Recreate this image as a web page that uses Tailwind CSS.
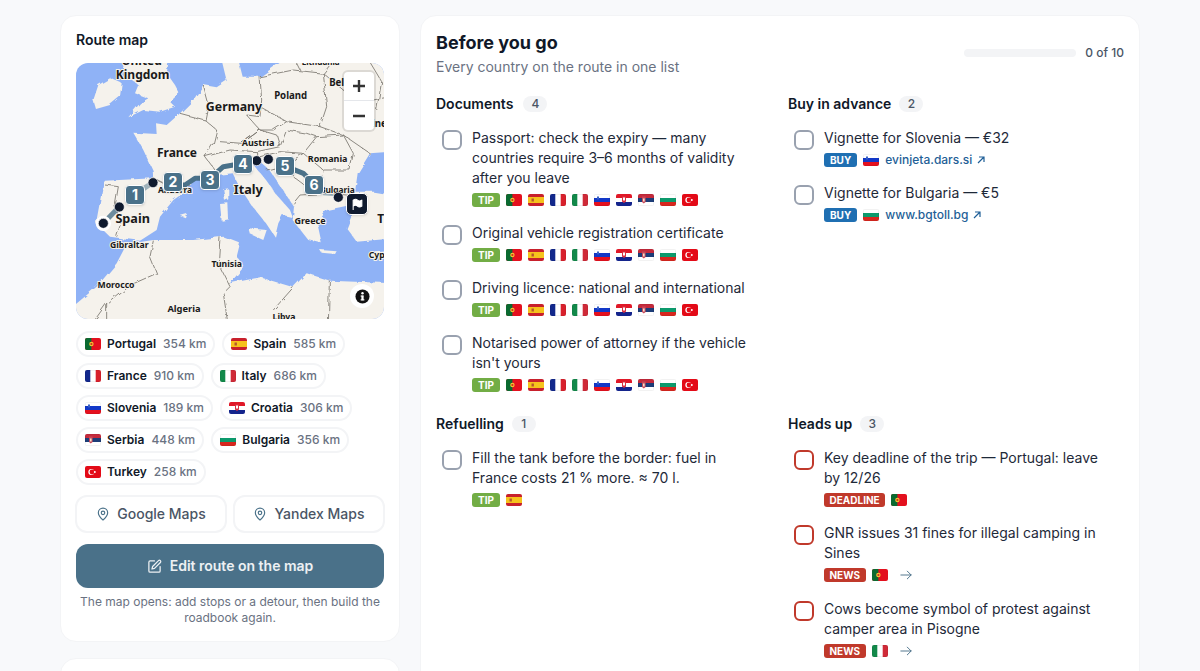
<!DOCTYPE html>
<html lang="en">
<head>
  <meta charset="UTF-8">
  <meta name="viewport" content="width=device-width, initial-scale=1.0">
  <title>Before you go</title>
  <script src="https://cdn.jsdelivr.net/npm/@tailwindcss/browser@4"></script>
</head>
<body class="bg-[#f8f9fb] h-screen overflow-hidden font-['Inter',sans-serif] text-gray-800">
  <!-- Flags -->
  <svg class="hidden">
    <symbol id="pt" viewBox="0 0 16 12"><rect width="16" height="12" fill="#e3101e"/><rect width="6.4" height="12" fill="#0a6a30"/><circle cx="6.4" cy="6" r="2.2" fill="#f4c430"/><circle cx="6.4" cy="6" r="1.1" fill="#c8281e"/></symbol>
    <symbol id="es" viewBox="0 0 16 12"><rect width="16" height="12" fill="#c8202c"/><rect y="3" width="16" height="6" fill="#f6c21c"/><rect x="3.5" y="4.5" width="2.4" height="3" fill="#b5572a"/></symbol>
    <symbol id="fr" viewBox="0 0 16 12"><rect width="16" height="12" fill="#fff"/><rect width="5.3" height="12" fill="#12288c"/><rect x="10.7" width="5.3" height="12" fill="#d8202c"/><rect x=".25" y=".25" width="15.5" height="11.5" fill="none" stroke="#000" stroke-opacity=".1" stroke-width=".5"/></symbol>
    <symbol id="it" viewBox="0 0 16 12"><rect width="16" height="12" fill="#fff"/><rect width="5.3" height="12" fill="#12894a"/><rect x="10.7" width="5.3" height="12" fill="#cf2a38"/><rect x=".25" y=".25" width="15.5" height="11.5" fill="none" stroke="#000" stroke-opacity=".1" stroke-width=".5"/></symbol>
    <symbol id="si" viewBox="0 0 16 12"><rect width="16" height="12" fill="#fff"/><rect y="4" width="16" height="4" fill="#1238c8"/><rect y="8" width="16" height="4" fill="#e5101e"/><path d="M3 2.500h2v2.500l-1 .8-1-.8z" fill="#3a62c4"/><rect x=".25" y=".25" width="15.5" height="11.5" fill="none" stroke="#000" stroke-opacity=".1" stroke-width=".5"/></symbol>
    <symbol id="hr" viewBox="0 0 16 12"><rect width="16" height="12" fill="#fff"/><rect width="16" height="4" fill="#e01828"/><rect y="8" width="16" height="4" fill="#14248c"/><path d="M6 2.500h4v5l-2 1.500-2-1.500z" fill="#d83040"/><path d="M7 3.500h2v3h-2z" fill="#fff"/></symbol>
    <symbol id="rs" viewBox="0 0 16 12"><rect width="16" height="12" fill="#fff"/><rect width="16" height="4" fill="#c52a3c"/><rect y="4" width="16" height="4" fill="#1d3d78"/><path d="M4 2.500h3.600v5.500l-1.800 1.500-1.800-1.500z" fill="#c8485a"/><path d="M5 4.500h1.600v3h-1.600z" fill="#f2e2c8"/><rect x=".25" y=".25" width="15.5" height="11.5" fill="none" stroke="#000" stroke-opacity=".1" stroke-width=".5"/></symbol>
    <symbol id="bg" viewBox="0 0 16 12"><rect width="16" height="12" fill="#fff"/><rect y="4" width="16" height="4" fill="#0c9a6c"/><rect y="8" width="16" height="4" fill="#d8261e"/><rect x=".25" y=".25" width="15.5" height="11.5" fill="none" stroke="#000" stroke-opacity=".1" stroke-width=".5"/></symbol>
    <symbol id="tr" viewBox="0 0 16 12"><rect width="16" height="12" fill="#e30a17"/><circle cx="6.300" cy="6" r="3" fill="#fff"/><circle cx="7" cy="6" r="2.400" fill="#e30a17"/><circle cx="9.800" cy="6" r="1" fill="#fff"/></symbol>
  </svg>

  <div class="mx-auto w-[1080px] flex items-start gap-5 pt-[15px]">
    <!-- Left column -->
    <div class="w-[340px] shrink-0 flex flex-col gap-4">
      <div class="bg-white rounded-2xl border border-gray-100 px-[15px] pt-[14px] h-[627px]">
        <h2 class="text-sm font-semibold text-gray-900 leading-5">Route map</h2>

        <!-- Map -->
        <div class="relative mt-[13px] h-[256px] rounded-xl overflow-hidden bg-[#8fb2f6]">
          <svg class="w-full h-full" viewBox="48 159 924 768" preserveAspectRatio="none">
            <defs>
              <filter id="rough" x="-5%" y="-5%" width="110%" height="110%"><feTurbulence type="fractalNoise" baseFrequency="0.035" numOctaves="3" seed="4"/><feDisplacementMap in="SourceGraphic" scale="14"/></filter>
            </defs>
            <g filter="url(#rough)">
              <g fill="#f5f2ec">
                <path d="M175 130L330 130L320 190L345 225L358 250L330 275L345 290L300 305L250 300L205 322L240 280L265 265L225 250L235 225L215 210L195 190Z"/>
                <path d="M115 225L150 205L185 220L180 260L150 285L108 297L100 270Z"/>
                <path d="M220 368L290 372L288 340L320 345L360 310L400 270L430 225L470 232L500 212L480 130L530 130L548 200L600 200L700 130L1000 130L1000 425L930 430L893 490L885 545L940 545L1000 555L1000 685L890 695L860 655L880 605L858 588L800 600L772 640L785 700L745 690L698 630L702 590L675 550L628 480L600 455L578 462L618 510L650 555L690 600L698 622L668 615L655 640L645 680L618 640L578 590L538 530L518 490L470 495L400 512L395 532L340 570L300 620L290 660L240 692L150 680L108 640L130 520L135 512L280 505L278 480L250 420Z"/>
                <path d="M20 905L110 830L170 760L200 702L280 690L400 690L490 680L540 700L530 740L552 770L510 820L600 802L700 832L740 790L810 812L1000 820L1000 960L20 960Z"/>
                <path d="M490 538L505 535L505 568L495 572Z"/>
                <path d="M480 582L505 580L507 628L485 632Z"/>
                <path d="M565 655L620 660L610 690L570 672Z"/>
                <path d="M360 618L382 612L378 625Z"/>
                <path d="M780 720L830 724L825 732L785 728Z"/>
                <path d="M925 725L990 720L990 745L940 745Z"/>
              </g>
              <g fill="none" stroke="#77746c" stroke-width="2.500" stroke-linejoin="round">
                <path d="M135 525L175 530L165 590L182 640L170 680"/>
                <path d="M280 505L330 530L395 530"/>
                <path d="M360 310L435 330L470 360L460 400L435 440L480 500"/>
                <path d="M430 225L445 280L435 330"/>
                <path d="M600 200L605 270L600 320L560 315L600 360L545 400L480 395"/>
                <path d="M600 200L700 180L790 190L800 290L780 350L680 335L600 290"/>
                <path d="M600 360L640 360L680 335"/>
                <path d="M545 400L600 360L650 375L660 410L590 425L510 420L435 440"/>
                <path d="M590 425L590 455"/>
                <path d="M660 410L680 360L740 370L770 380L730 430L660 425L600 440"/>
                <path d="M770 380L850 375L880 430L870 480L790 480L730 430"/>
                <path d="M780 350L850 375L930 430"/>
                <path d="M790 480L780 520L800 550L885 545"/>
                <path d="M730 430L700 450L700 500L740 530L780 520"/>
                <path d="M620 480L660 470L700 450"/>
                <path d="M700 580L720 555L800 550L860 555L880 562"/>
                <path d="M790 190L830 140"/>
                <path d="M790 190L850 240L940 270L990 260"/>
                <path d="M700 140L720 180M920 140L965 215L950 300"/>
                <path d="M280 692L270 740L290 790L200 830L140 880L140 950"/>
                <path d="M480 682L475 760L510 830L490 850L505 950"/>
                <path d="M808 812L805 950"/>
                <path d="M90 950L140 880"/>
                <path d="M700 832L640 900"/>
              </g>
            </g>
            <!-- Route -->
            <g fill="none" stroke="#4a7189" stroke-width="15" stroke-linejoin="round">
              <path d="M130 640L178 590" stroke-opacity=".8"/>
              <path d="M225 553L278 518" stroke-opacity=".5"/>
              <path d="M340 525L375 525L405 505L450 505L490 470L550 460"/>
              <path d="M672 467L730 490L762 522"/>
              <path d="M790 548L835 552" stroke-opacity=".5"/>
            </g>
            <!-- Labels -->
            <g class="font-['Noto_Sans',sans-serif] font-bold" fill="#1a1a1a" stroke="#f5f2ec" stroke-width="6" paint-order="stroke" text-anchor="middle">
              <text x="245" y="165" font-size="36">United</text>
              <text x="248" y="208" font-size="36">Kingdom</text>
              <text x="522" y="303" font-size="37">Germany</text>
              <text x="692" y="266" font-size="29">Poland</text>
              <text x="830" y="227" font-size="29">Bel</text>
              <text x="958" y="352" font-size="29">ine</text>
              <text x="782" y="165" font-size="24">Lithuania</text>
              <text x="594" y="408" font-size="27">Austria</text>
              <text x="351" y="440" font-size="36">France</text>
              <text x="803" y="455" font-size="27">Romania</text>
              <text x="345" y="550" font-size="25">Andorra</text>
              <text x="565" y="552" font-size="38">Italy</text>
              <text x="832" y="548" font-size="25">Bulgaria</text>
              <text x="218" y="638" font-size="38">Spain</text>
              <text x="750" y="643" font-size="27">Greece</text>
              <text x="962" y="638" font-size="36">T</text>
              <text x="208" y="714" font-size="26">Gibraltar</text>
              <text x="500" y="770" font-size="26">Tunisia</text>
              <text x="168" y="833" font-size="26">Morocco</text>
              <text x="950" y="743" font-size="26">Cyp</text>
              <text x="372" y="905" font-size="28">Algeria</text>
              <text x="672" y="930" font-size="26">Libya</text>
            </g>
            <!-- Stops -->
            <circle cx="130" cy="640" r="23" fill="#fff"/>
            <g fill="#0f1a2e" stroke="#fff" stroke-width="2">
              <circle cx="130" cy="640" r="15"/>
              <circle cx="178" cy="591" r="15"/>
              <circle cx="279" cy="518" r="15"/>
              <circle cx="590" cy="452" r="15"/>
              <circle cx="625" cy="448" r="15"/>
              <circle cx="835" cy="562" r="15"/>
            </g>
          </svg>

          <!-- Numbered pins -->
          <div class="absolute left-[49px] top-[122px] w-5 h-5 rounded-[4px] border-[1.5px] border-white bg-[#4a7189] shadow text-white text-sm font-bold flex items-center justify-center">1</div>
          <div class="absolute left-[87px] top-[109px] w-5 h-5 rounded-[4px] border-[1.5px] border-white bg-[#4a7189] shadow text-white text-sm font-bold flex items-center justify-center">2</div>
          <div class="absolute left-[124px] top-[107px] w-5 h-5 rounded-[4px] border-[1.5px] border-white bg-[#4a7189] shadow text-white text-sm font-bold flex items-center justify-center">3</div>
          <div class="absolute left-[157px] top-[91px] w-5 h-5 rounded-[4px] border-[1.5px] border-white bg-[#4a7189] shadow text-white text-sm font-bold flex items-center justify-center">4</div>
          <div class="absolute left-[199px] top-[93px] w-5 h-5 rounded-[4px] border-[1.5px] border-white bg-[#4a7189] shadow text-white text-sm font-bold flex items-center justify-center">5</div>
          <div class="absolute left-[228px] top-[112px] w-5 h-5 rounded-[4px] border-[1.5px] border-white bg-[#4a7189] shadow text-white text-sm font-bold flex items-center justify-center">6</div>
          <div class="absolute left-[270px] top-[130px] w-[22px] h-[22px] rounded-[5px] border-[1.5px] border-white bg-[#0f1a2e] shadow flex items-center justify-center">
            <svg class="w-[13px] h-[13px]" viewBox="0 0 24 24" fill="#fff" stroke="#fff" stroke-width="2" stroke-linejoin="round"><path d="M4 22V4c3-2 6-2 8 0s5 2 8 0v11c-3 2-6 2-8 0s-5-2-8 0"/></svg>
          </div>

          <!-- Zoom control -->
          <div class="absolute left-[268px] top-[9px] w-[30px] rounded-[4px] bg-white shadow-[0_0_0_2px_rgba(0,0,0,0.1)] flex flex-col divide-y divide-gray-200">
            <div class="h-[29px] flex items-center justify-center">
              <svg class="w-3.5 h-3.5" viewBox="0 0 14 14" stroke="#333" stroke-width="2.400"><path d="M7 1v12M1 7h12"/></svg>
            </div>
            <div class="h-[29px] flex items-center justify-center">
              <svg class="w-3.5 h-3.5" viewBox="0 0 14 14" stroke="#333" stroke-width="2.400"><path d="M1 7h12"/></svg>
            </div>
          </div>

          <!-- Attribution button -->
          <div class="absolute left-[274px] top-[221px] w-6 h-6 rounded-full bg-white flex items-center justify-center">
            <svg class="w-[15px] h-[15px]" viewBox="0 0 16 16"><circle cx="8" cy="8" r="7.500" fill="#111"/><rect x="6.800" y="7" width="2.400" height="5" fill="#fff"/><rect x="6" y="11" width="4" height="1.200" fill="#fff"/><rect x="6" y="7" width="3" height="1.100" fill="#fff"/><circle cx="8" cy="4.500" r="1.300" fill="#fff"/></svg>
          </div>
        </div>

        <!-- Countries -->
        <div class="mt-3 flex flex-wrap gap-x-[7px] gap-y-[6px] text-xs leading-4">
          <div class="h-[26px] px-[7px] rounded-full border-2 border-gray-100 flex items-center"><svg class="w-4 h-3 rounded-[2px]"><use href="#pt"/></svg><span class="ml-[6px] font-semibold text-gray-900">Portugal</span><span class="ml-[7px] font-medium text-gray-500">354 km</span></div>
          <div class="h-[26px] px-[7px] rounded-full border-2 border-gray-100 flex items-center"><svg class="w-4 h-3 rounded-[2px]"><use href="#es"/></svg><span class="ml-[6px] font-semibold text-gray-900">Spain</span><span class="ml-[7px] font-medium text-gray-500">585 km</span></div>
          <div class="h-[26px] px-[7px] rounded-full border-2 border-gray-100 flex items-center"><svg class="w-4 h-3 rounded-[2px]"><use href="#fr"/></svg><span class="ml-[6px] font-semibold text-gray-900">France</span><span class="ml-[7px] font-medium text-gray-500">910 km</span></div>
          <div class="h-[26px] px-[7px] rounded-full border-2 border-gray-100 flex items-center"><svg class="w-4 h-3 rounded-[2px]"><use href="#it"/></svg><span class="ml-[6px] font-semibold text-gray-900">Italy</span><span class="ml-[7px] font-medium text-gray-500">686 km</span></div>
          <div class="h-[26px] px-[7px] rounded-full border-2 border-gray-100 flex items-center"><svg class="w-4 h-3 rounded-[2px]"><use href="#si"/></svg><span class="ml-[6px] font-semibold text-gray-900">Slovenia</span><span class="ml-[7px] font-medium text-gray-500">189 km</span></div>
          <div class="h-[26px] px-[7px] rounded-full border-2 border-gray-100 flex items-center"><svg class="w-4 h-3 rounded-[2px]"><use href="#hr"/></svg><span class="ml-[6px] font-semibold text-gray-900">Croatia</span><span class="ml-[7px] font-medium text-gray-500">306 km</span></div>
          <div class="h-[26px] px-[7px] rounded-full border-2 border-gray-100 flex items-center"><svg class="w-4 h-3 rounded-[2px]"><use href="#rs"/></svg><span class="ml-[6px] font-semibold text-gray-900">Serbia</span><span class="ml-[7px] font-medium text-gray-500">448 km</span></div>
          <div class="h-[26px] px-[7px] rounded-full border-2 border-gray-100 flex items-center"><svg class="w-4 h-3 rounded-[2px]"><use href="#bg"/></svg><span class="ml-[6px] font-semibold text-gray-900">Bulgaria</span><span class="ml-[7px] font-medium text-gray-500">356 km</span></div>
          <div class="h-[26px] px-[7px] rounded-full border-2 border-gray-100 flex items-center"><svg class="w-4 h-3 rounded-[2px]"><use href="#tr"/></svg><span class="ml-[6px] font-semibold text-gray-900">Turkey</span><span class="ml-[7px] font-medium text-gray-500">258 km</span></div>
        </div>

        <!-- External maps -->
        <div class="mt-[10px] -mx-px grid grid-cols-2 gap-[6px]">
          <a class="h-[38px] rounded-xl border-2 border-gray-100 flex items-center justify-center gap-[7px] text-sm font-medium text-gray-600">
            <svg class="w-[14px] h-[14px]" viewBox="0 0 24 24" fill="none" stroke="#4a7189" stroke-width="2" stroke-linecap="round" stroke-linejoin="round"><path d="M20 10c0 5-5.500 10.200-7.400 11.800a1 1 0 0 1-1.200 0C9.500 20.200 4 15 4 10a8 8 0 0 1 16 0"/><circle cx="12" cy="10" r="3"/></svg>
            Google Maps
          </a>
          <a class="h-[38px] rounded-xl border-2 border-gray-100 flex items-center justify-center gap-[7px] text-sm font-medium text-gray-600">
            <svg class="w-[14px] h-[14px]" viewBox="0 0 24 24" fill="none" stroke="#4a7189" stroke-width="2" stroke-linecap="round" stroke-linejoin="round"><path d="M20 10c0 5-5.500 10.200-7.400 11.800a1 1 0 0 1-1.200 0C9.500 20.200 4 15 4 10a8 8 0 0 1 16 0"/><circle cx="12" cy="10" r="3"/></svg>
            Yandex Maps
          </a>
        </div>

        <button class="mt-[11px] w-full h-[44px] rounded-xl bg-[#4a7189] text-white/90 text-sm font-semibold flex items-center justify-center gap-2">
          <svg class="w-[15px] h-[15px]" viewBox="0 0 24 24" fill="none" stroke="currentColor" stroke-width="2" stroke-linecap="round" stroke-linejoin="round"><path d="M12 3H5a2 2 0 0 0-2 2v14a2 2 0 0 0 2 2h14a2 2 0 0 0 2-2v-7"/><path d="M18.400 2.600a2.100 2.100 0 0 1 3 3L12 15l-4 1 1-4z"/></svg>
          Edit route on the map
        </button>
        <p class="mt-[6px] text-xs leading-4 text-gray-500 text-center">The map opens: add stops or a detour, then build the roadbook again.</p>
      </div>

      <div class="bg-white rounded-2xl border border-gray-100 h-[200px]"></div>
    </div>

    <!-- Checklist -->
    <div class="flex-1 bg-white rounded-2xl border border-gray-100 px-[15px] pt-[15px] min-h-[800px]">
      <div class="flex items-start justify-between">
        <div>
          <h1 class="text-lg font-bold text-gray-900 leading-6">Before you go</h1>
          <p class="mt-[2px] text-sm leading-5 text-gray-500">Every country on the route in one list</p>
        </div>
        <div class="mt-[14px] flex items-center gap-[9px]">
          <div class="w-[112px] h-2 rounded-full bg-gray-100"></div>
          <span class="text-xs leading-4 font-medium text-gray-600">0 of 10</span>
        </div>
      </div>

      <div class="mt-[17px] grid grid-cols-2 gap-x-4 items-start">
        <div class="flex flex-col">
          <!-- Documents -->
          <div class="flex items-center gap-2 text-sm font-semibold leading-5 text-gray-900">Documents<span class="ml-[2px] w-6 h-4 rounded-full bg-gray-100 text-xs font-medium text-gray-600 flex items-center justify-center">4</span></div>
          <ul class="mt-[14px] flex flex-col gap-4">
            <li class="flex gap-[10px] pl-[6px] pr-4">
              <span class="mt-[2px] shrink-0 w-5 h-5 rounded-[6px] border-2 border-gray-400"></span>
              <div>
                <p class="text-sm leading-5">Passport: check the expiry — many countries require 3–6 months of validity after you leave</p>
                <div class="mt-[5px] h-[14px] flex items-center gap-[6px]">
                  <span class="h-[14px] px-[6px] rounded-[3px] bg-[#72ad45] text-white text-[10px] font-bold leading-[14px]">TIP</span>
                  <svg class="w-4 h-3 rounded-[2px]"><use href="#pt"/></svg><svg class="w-4 h-3 rounded-[2px]"><use href="#es"/></svg><svg class="w-4 h-3 rounded-[2px]"><use href="#fr"/></svg><svg class="w-4 h-3 rounded-[2px]"><use href="#it"/></svg><svg class="w-4 h-3 rounded-[2px]"><use href="#si"/></svg><svg class="w-4 h-3 rounded-[2px]"><use href="#hr"/></svg><svg class="w-4 h-3 rounded-[2px]"><use href="#rs"/></svg><svg class="w-4 h-3 rounded-[2px]"><use href="#bg"/></svg><svg class="w-4 h-3 rounded-[2px]"><use href="#tr"/></svg>
                </div>
              </div>
            </li>
            <li class="flex gap-[10px] pl-[6px] pr-4">
              <span class="mt-[2px] shrink-0 w-5 h-5 rounded-[6px] border-2 border-gray-400"></span>
              <div>
                <p class="text-sm leading-5">Original vehicle registration certificate</p>
                <div class="mt-[5px] h-[14px] flex items-center gap-[6px]">
                  <span class="h-[14px] px-[6px] rounded-[3px] bg-[#72ad45] text-white text-[10px] font-bold leading-[14px]">TIP</span>
                  <svg class="w-4 h-3 rounded-[2px]"><use href="#pt"/></svg><svg class="w-4 h-3 rounded-[2px]"><use href="#es"/></svg><svg class="w-4 h-3 rounded-[2px]"><use href="#fr"/></svg><svg class="w-4 h-3 rounded-[2px]"><use href="#it"/></svg><svg class="w-4 h-3 rounded-[2px]"><use href="#si"/></svg><svg class="w-4 h-3 rounded-[2px]"><use href="#hr"/></svg><svg class="w-4 h-3 rounded-[2px]"><use href="#rs"/></svg><svg class="w-4 h-3 rounded-[2px]"><use href="#bg"/></svg><svg class="w-4 h-3 rounded-[2px]"><use href="#tr"/></svg>
                </div>
              </div>
            </li>
            <li class="flex gap-[10px] pl-[6px] pr-4">
              <span class="mt-[2px] shrink-0 w-5 h-5 rounded-[6px] border-2 border-gray-400"></span>
              <div>
                <p class="text-sm leading-5">Driving licence: national and international</p>
                <div class="mt-[5px] h-[14px] flex items-center gap-[6px]">
                  <span class="h-[14px] px-[6px] rounded-[3px] bg-[#72ad45] text-white text-[10px] font-bold leading-[14px]">TIP</span>
                  <svg class="w-4 h-3 rounded-[2px]"><use href="#pt"/></svg><svg class="w-4 h-3 rounded-[2px]"><use href="#es"/></svg><svg class="w-4 h-3 rounded-[2px]"><use href="#fr"/></svg><svg class="w-4 h-3 rounded-[2px]"><use href="#it"/></svg><svg class="w-4 h-3 rounded-[2px]"><use href="#si"/></svg><svg class="w-4 h-3 rounded-[2px]"><use href="#hr"/></svg><svg class="w-4 h-3 rounded-[2px]"><use href="#rs"/></svg><svg class="w-4 h-3 rounded-[2px]"><use href="#bg"/></svg><svg class="w-4 h-3 rounded-[2px]"><use href="#tr"/></svg>
                </div>
              </div>
            </li>
            <li class="flex gap-[10px] pl-[6px] pr-4">
              <span class="mt-[2px] shrink-0 w-5 h-5 rounded-[6px] border-2 border-gray-400"></span>
              <div>
                <p class="text-sm leading-5">Notarised power of attorney if the vehicle isn't yours</p>
                <div class="mt-[5px] h-[14px] flex items-center gap-[6px]">
                  <span class="h-[14px] px-[6px] rounded-[3px] bg-[#72ad45] text-white text-[10px] font-bold leading-[14px]">TIP</span>
                  <svg class="w-4 h-3 rounded-[2px]"><use href="#pt"/></svg><svg class="w-4 h-3 rounded-[2px]"><use href="#es"/></svg><svg class="w-4 h-3 rounded-[2px]"><use href="#fr"/></svg><svg class="w-4 h-3 rounded-[2px]"><use href="#it"/></svg><svg class="w-4 h-3 rounded-[2px]"><use href="#si"/></svg><svg class="w-4 h-3 rounded-[2px]"><use href="#hr"/></svg><svg class="w-4 h-3 rounded-[2px]"><use href="#rs"/></svg><svg class="w-4 h-3 rounded-[2px]"><use href="#bg"/></svg><svg class="w-4 h-3 rounded-[2px]"><use href="#tr"/></svg>
                </div>
              </div>
            </li>
          </ul>

          <!-- Refuelling -->
          <div class="mt-[22px] flex items-center gap-2 text-sm font-semibold leading-5 text-gray-900">Refuelling<span class="w-6 h-4 rounded-full bg-gray-100 text-xs font-medium text-gray-600 flex items-center justify-center">1</span></div>
          <ul class="mt-[14px] flex flex-col gap-4">
            <li class="flex gap-[10px] pl-[6px] pr-4">
              <span class="mt-[2px] shrink-0 w-5 h-5 rounded-[6px] border-2 border-gray-400"></span>
              <div>
                <p class="text-sm leading-5">Fill the tank before the border: fuel in France costs 21 % more. ≈ 70 l.</p>
                <div class="mt-[5px] h-[14px] flex items-center gap-[6px]">
                  <span class="h-[14px] px-[6px] rounded-[3px] bg-[#72ad45] text-white text-[10px] font-bold leading-[14px]">TIP</span>
                  <svg class="w-4 h-3 rounded-[2px]"><use href="#es"/></svg>
                </div>
              </div>
            </li>
          </ul>
        </div>

        <div class="flex flex-col">
          <!-- Buy in advance -->
          <div class="flex items-center gap-2 text-sm font-semibold leading-5 text-gray-900">Buy in advance<span class="w-6 h-4 rounded-full bg-gray-100 text-xs font-medium text-gray-600 flex items-center justify-center">2</span></div>
          <ul class="mt-[14px] flex flex-col gap-4">
            <li class="flex gap-[10px] pl-[6px] pr-4">
              <span class="mt-[2px] shrink-0 w-5 h-5 rounded-[6px] border-2 border-gray-400"></span>
              <div>
                <p class="text-sm leading-5">Vignette for Slovenia — €32</p>
                <div class="mt-[5px] h-[14px] flex items-center gap-[6px]">
                  <span class="h-[14px] px-[6px] rounded-[3px] bg-[#1f6fb2] text-white text-[10px] font-bold leading-[14px]">BUY</span>
                  <svg class="w-4 h-3 rounded-[2px]"><use href="#si"/></svg>
                  <a class="text-xs font-medium text-[#1f5f97] flex items-center gap-[4px]">evinjeta.dars.si
                    <svg class="w-[10px] h-[10px]" viewBox="0 0 10 10" fill="none" stroke="currentColor" stroke-width="1.200"><path d="M2 8l6-6M3 2h5v5"/></svg>
                  </a>
                </div>
              </div>
            </li>
            <li class="flex gap-[10px] pl-[6px] pr-4">
              <span class="mt-[2px] shrink-0 w-5 h-5 rounded-[6px] border-2 border-gray-400"></span>
              <div>
                <p class="text-sm leading-5">Vignette for Bulgaria — €5</p>
                <div class="mt-[5px] h-[14px] flex items-center gap-[6px]">
                  <span class="h-[14px] px-[6px] rounded-[3px] bg-[#1f6fb2] text-white text-[10px] font-bold leading-[14px]">BUY</span>
                  <svg class="w-4 h-3 rounded-[2px]"><use href="#bg"/></svg>
                  <a class="text-xs font-medium text-[#1f5f97] flex items-center gap-[4px]">www.bgtoll.bg
                    <svg class="w-[10px] h-[10px]" viewBox="0 0 10 10" fill="none" stroke="currentColor" stroke-width="1.200"><path d="M2 8l6-6M3 2h5v5"/></svg>
                  </a>
                </div>
              </div>
            </li>
          </ul>

          <!-- Heads up -->
          <div class="mt-[192px] flex items-center gap-2 text-sm font-semibold leading-5 text-gray-900">Heads up<span class="w-6 h-4 rounded-full bg-gray-100 text-xs font-medium text-gray-600 flex items-center justify-center">3</span></div>
          <ul class="mt-[14px] flex flex-col gap-4">
            <li class="flex gap-[10px] pl-[6px] pr-4">
              <span class="mt-[2px] shrink-0 w-5 h-5 rounded-[6px] border-2 border-[#c0392b]"></span>
              <div>
                <p class="text-sm leading-5">Key deadline of the trip — Portugal: leave by 12/26</p>
                <div class="mt-[5px] h-[14px] flex items-center gap-[6px]">
                  <span class="h-[14px] px-[5.5px] rounded-[3px] bg-[#c0392b] text-white text-[10px] font-bold leading-[14px]">DEADLINE</span>
                  <svg class="w-4 h-3 rounded-[2px]"><use href="#pt"/></svg>
                </div>
              </div>
            </li>
            <li class="flex gap-[10px] pl-[6px] pr-4">
              <span class="mt-[2px] shrink-0 w-5 h-5 rounded-[6px] border-2 border-[#c0392b]"></span>
              <div>
                <p class="text-sm leading-5">GNR issues 31 fines for illegal camping in Sines</p>
                <div class="mt-[4px] h-[16px] flex items-center gap-[6px]">
                  <span class="h-[14px] px-[5.5px] rounded-[3px] bg-[#c0392b] text-white text-[10px] font-bold leading-[14px]">NEWS</span>
                  <svg class="w-4 h-3 rounded-[2px]"><use href="#pt"/></svg>
                  <svg class="ml-[6px] w-[12px] h-[12px]" viewBox="0 0 14 14" fill="none" stroke="#4a7189" stroke-width="1.100" stroke-linecap="round" stroke-linejoin="round"><path d="M1 7h12M8.500 2.500L13 7l-4.500 4.500"/></svg>
                </div>
              </div>
            </li>
            <li class="flex gap-[10px] pl-[6px] pr-4">
              <span class="mt-[2px] shrink-0 w-5 h-5 rounded-[6px] border-2 border-[#c0392b]"></span>
              <div>
                <p class="text-sm leading-5">Cows become symbol of protest against camper area in Pisogne</p>
                <div class="mt-[4px] h-[16px] flex items-center gap-[6px]">
                  <span class="h-[14px] px-[5.5px] rounded-[3px] bg-[#c0392b] text-white text-[10px] font-bold leading-[14px]">NEWS</span>
                  <svg class="w-4 h-3 rounded-[2px]"><use href="#it"/></svg>
                  <svg class="ml-[6px] w-[12px] h-[12px]" viewBox="0 0 14 14" fill="none" stroke="#4a7189" stroke-width="1.100" stroke-linecap="round" stroke-linejoin="round"><path d="M1 7h12M8.500 2.500L13 7l-4.500 4.500"/></svg>
                </div>
              </div>
            </li>
          </ul>
        </div>
      </div>
    </div>
  </div>
</body>
</html>
